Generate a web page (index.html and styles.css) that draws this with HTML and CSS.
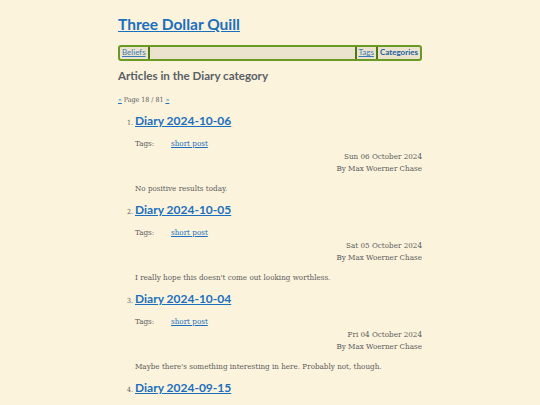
FILE: index.html
```html
<!DOCTYPE html>
<html>
<head>
<meta charset="utf-8">
<link rel="stylesheet" href="styles.css">
</head>
<body>
<div class="page">
  <h1 class="site-title"><a href="#">Three Dollar Quill</a></h1>
  <nav class="nav">
    <a href="#" class="nav-link first">Beliefs</a>
    <span class="nav-fill"></span>
    <a href="#" class="nav-link sep">Tags</a>
    <a href="#" class="nav-link sep current">Categories</a>
  </nav>
  <h2 class="section-title">Articles in the Diary category</h2>
  <p class="pager"><a href="#">«</a> Page 18 / 81 <a href="#">»</a></p>
  <ol class="articles">
    <li class="article">
      <h3 class="article-title"><a href="#">Diary 2024-10-06</a></h3>
      <div class="tags"><span class="tags-label">Tags:</span><a href="#">short post</a></div>
      <div class="meta date">Sun 06 October 2024</div>
      <div class="meta">By Max Woerner Chase</div>
      <p class="summary">No positive results today.</p>
    </li>
    <li class="article">
      <h3 class="article-title"><a href="#">Diary 2024-10-05</a></h3>
      <div class="tags"><span class="tags-label">Tags:</span><a href="#">short post</a></div>
      <div class="meta date">Sat 05 October 2024</div>
      <div class="meta">By Max Woerner Chase</div>
      <p class="summary">I really hope this doesn't come out looking worthless.</p>
    </li>
    <li class="article">
      <h3 class="article-title"><a href="#">Diary 2024-10-04</a></h3>
      <div class="tags"><span class="tags-label">Tags:</span><a href="#">short post</a></div>
      <div class="meta date">Fri 04 October 2024</div>
      <div class="meta">By Max Woerner Chase</div>
      <p class="summary">Maybe there's something interesting in here. Probably not, though.</p>
    </li>
    <li class="article">
      <h3 class="article-title"><a href="#">Diary 2024-09-15</a></h3>
      <div class="tags"><span class="tags-label">Tags:</span><a href="#">short post</a></div>
      <div class="meta date">Sun 15 September 2024</div>
      <div class="meta">By Max Woerner Chase</div>
      <p class="summary">Nothing much.</p>
    </li>
  </ol>
</div>
</body>
</html>
```
FILE: styles.css
```css
html, body {
  margin: 0;
  padding: 0;
  background: #fbf3dc;
}
body {
  font-family: "DejaVu Serif Condensed", "DejaVu Serif", serif;
  font-stretch: condensed;
  color: #5c5c5c;
  font-size: 8px;
}
.page {
  width: 304px;
  margin: 0 auto;
  padding-top: 12px;
}
a {
  color: #1a6fbf;
}
.site-title {
  font-family: Lato, sans-serif;
  font-size: 15.5px;
  font-weight: 700;
  margin: 0;
  line-height: 24px;
}
.nav {
  display: flex;
  align-items: stretch;
  margin-top: 9px;
  border: 2px solid #6b9a24;
  border-radius: 3px;
  background: #ebe3cd;
  font-family: Lato, sans-serif;
  font-size: 8px;
  line-height: 11.5px;
}
.nav-link {
  padding: 0 2px;
  color: #3a7bb8;
}
.nav-link.first {
  border-right: 2px solid #4c7a10;
}
.nav-link.sep {
  border-left: 2px solid #4c7a10;
}
.nav-link.current {
  font-weight: 700;
  text-decoration: none;
  color: #1a5fa0;
}
.nav-fill {
  flex: 1;
}
.section-title {
  font-family: Lato, sans-serif;
  font-size: 11.6px;
  font-weight: 700;
  color: #5a6066;
  margin: 7px 0 0;
  line-height: 16px;
}
.pager {
  font-size: 7px;
  margin: 10px 0 0;
  line-height: 12px;
}
.articles {
  margin: 7px 0 0;
  padding-left: 17px;
  list-style: decimal;
}
.article::marker {
  font-size: 7px;
}
.article-title {
  font-family: Lato, sans-serif;
  font-size: 12px;
  font-weight: 700;
  margin: 0;
  line-height: 16px;
}
.tags {
  margin-top: 9px;
  line-height: 12px;
}
.tags-label {
  display: inline-block;
  width: 36px;
}
.meta {
  text-align: right;
  line-height: 12px;
}
.meta.date {
  margin-top: 1px;
}
.summary {
  margin: 8px 0 7px;
  line-height: 12px;
}
```
